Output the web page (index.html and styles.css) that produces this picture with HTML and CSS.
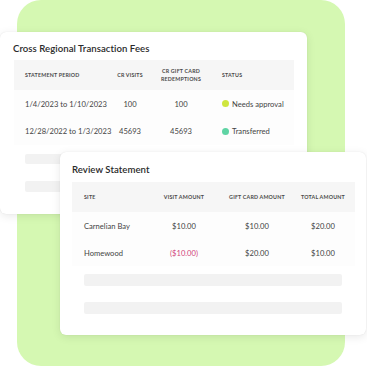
FILE: index.html
```html
<!DOCTYPE html>
<html>
<head>
<meta charset="utf-8">
<link rel="stylesheet" href="styles.css">
</head>
<body>
<div class="stage">
  <div class="green"></div>

  <div class="card card-fees">
    <h2 class="title">Cross Regional Transaction Fees</h2>
    <div class="table fees">
      <div class="row head">
        <div class="c1">STATEMENT PERIOD</div>
        <div class="cc">CR VISITS</div>
        <div class="cc">CR GIFT CARD<br>REDEMPTIONS</div>
        <div class="c4">STATUS</div>
      </div>
      <div class="row body">
        <div class="c1">1/4/2023 to 1/10/2023</div>
        <div class="cc">100</div>
        <div class="cc">100</div>
        <div class="c4"><span class="dot dot-yellow"></span>Needs approval</div>
      </div>
      <div class="row body">
        <div class="c1">12/28/2022 to 1/3/2023</div>
        <div class="cc">45693</div>
        <div class="cc">45693</div>
        <div class="c4"><span class="dot dot-teal"></span>Transferred</div>
      </div>
    </div>
    <div class="skel skel-a"></div>
    <div class="skel skel-b"></div>
  </div>

  <div class="card card-review">
    <h2 class="title">Review Statement</h2>
    <div class="table review">
      <div class="row head">
        <div class="c1">SITE</div>
        <div class="cc">VISIT AMOUNT</div>
        <div class="cc">GIFT CARD AMOUNT</div>
        <div class="cc">TOTAL AMOUNT</div>
      </div>
      <div class="row body">
        <div class="c1">Carnelian Bay</div>
        <div class="cc">$10.00</div>
        <div class="cc">$10.00</div>
        <div class="cc">$20.00</div>
      </div>
      <div class="row body">
        <div class="c1">Homewood</div>
        <div class="cc neg">($10.00)</div>
        <div class="cc">$20.00</div>
        <div class="cc">$10.00</div>
      </div>
    </div>
    <div class="skel skel-c"></div>
    <div class="skel skel-d"></div>
  </div>
</div>
</body>
</html>
```

FILE: styles.css
```css
html, body {
  margin: 0;
  padding: 0;
  background: #ffffff;
}
body {
  font-family: Lato, "Noto Sans", sans-serif;
  color: #3b3b3b;
}
.stage {
  position: relative;
  width: 367px;
  height: 367px;
  overflow: hidden;
}
.green {
  position: absolute;
  left: 17px;
  top: 0;
  width: 328px;
  height: 366px;
  background: #d5f8b2;
  border-radius: 24px;
}
.card {
  position: absolute;
  background: #ffffff;
  border-radius: 6px;
  box-shadow: 0 2px 10px rgba(0, 0, 0, 0.09), 0 0 1px rgba(0, 0, 0, 0.12);
  box-sizing: border-box;
  display: flex;
  flex-direction: column;
}
.card-fees {
  left: 0;
  top: 32px;
  width: 307px;
  height: 182px;
  padding: 10px 13px 0 14px;
}
.card-review {
  left: 60px;
  top: 152px;
  width: 306px;
  height: 183px;
  padding: 11px 11px 0 12px;
}
.title {
  margin: 0;
  font-size: 9.6px;
  line-height: 13px;
  font-weight: 600;
  color: #2a2a2a;
  letter-spacing: 0.05px;
}
.card-fees .title { margin-left: -1px; }
.table {
  display: flex;
  flex-direction: column;
}
.fees { margin-top: 5px; }
.review { margin-top: 6px; }
.row {
  display: grid;
  align-items: center;
  white-space: nowrap;
}
.fees .row { grid-template-columns: 91px 50px 52px 1fr; }
.review .row { grid-template-columns: 82px 60px 86px 46px 1fr; }
.head {
  background: #f6f6f6;
  font-size: 5.3px;
  line-height: 8px;
  font-weight: 700;
  color: #4a4a4a;
  letter-spacing: 0.2px;
}
.fees .head { height: 30px; }
.review .head { height: 30px; }
.body {
  font-size: 7.6px;
  color: #444444;
  background: #fdfdfd;
}
.fees .body { height: 28px; }
.fees .body:nth-child(2) { height: 27px; }
.review .body { height: 27px; }
.c1 { padding-left: 11px; }
.review .c1 { padding-left: 12px; }
.cc { text-align: center; }
.c4 {
  padding-left: 15px;
  display: flex;
  align-items: center;
}
.dot {
  width: 7px;
  height: 7px;
  border-radius: 50%;
  margin-right: 3px;
  flex: none;
}
.dot-yellow { background: #cfe63f; }
.dot-teal { background: #5fd4a4; }
.neg { color: #d2467c; }
.skel {
  background: #f2f2f2;
  border-radius: 2px;
  height: 10px;
}
.skel-a { margin: 9px 0 0 11px; width: 260px; }
.skel-b { margin: 17px 0 0 11px; width: 260px; height: 11px; }
.skel-c { margin: 8px 0 0 12px; width: 258px; height: 12px; }
.skel-d { margin: 16px 0 0 12px; width: 258px; height: 12px; }
```
